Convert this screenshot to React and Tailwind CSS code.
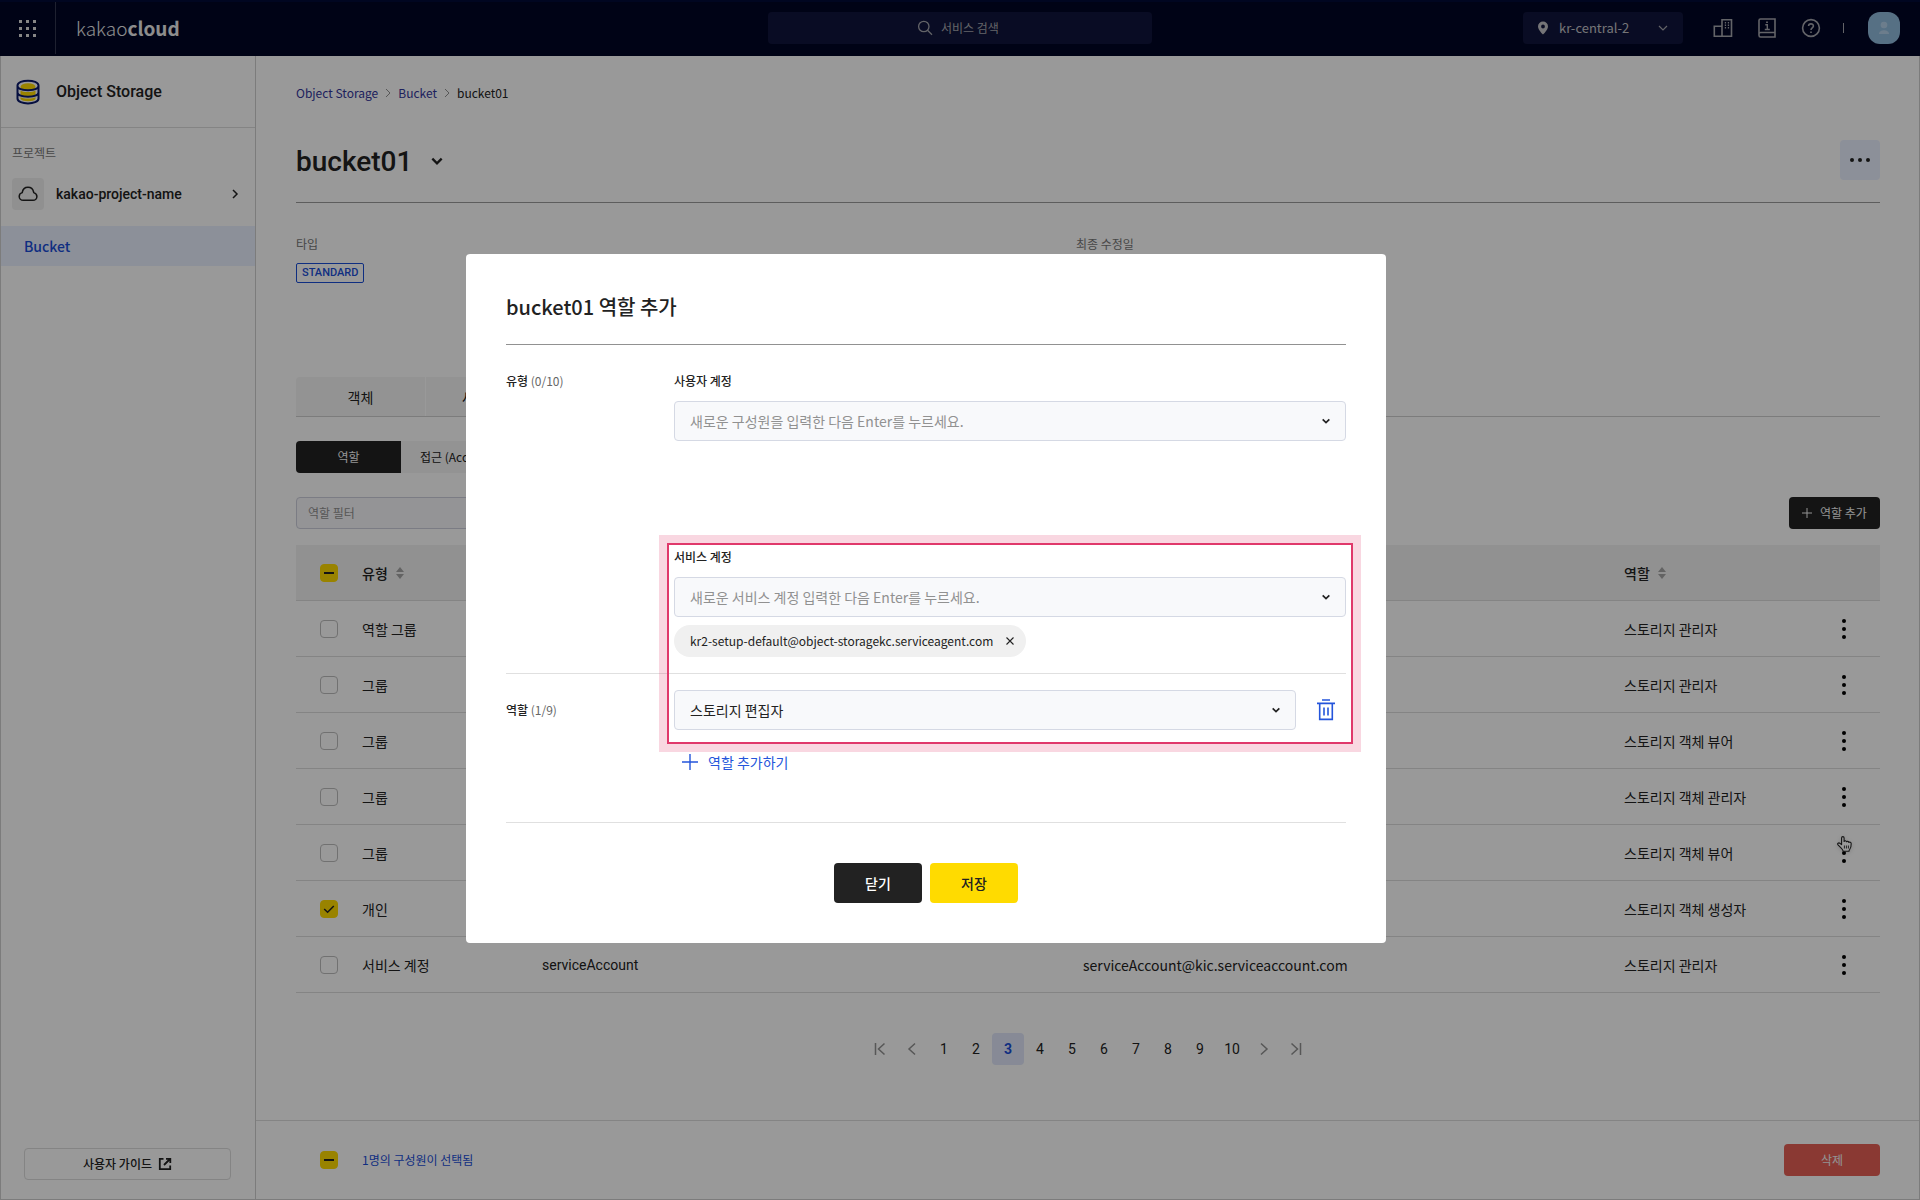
import React, { useState } from "react";

const rows = [
  { type: "역할 그룹", role: "스토리지 관리자" },
  { type: "그룹", role: "스토리지 관리자" },
  { type: "그룹", role: "스토리지 객체 뷰어" },
  { type: "그룹", role: "스토리지 객체 관리자" },
  { type: "그룹", role: "스토리지 객체 뷰어", hovered: true },
  { type: "개인", role: "스토리지 객체 생성자", checked: true },
  {
    type: "서비스 계정",
    name: "serviceAccount",
    email: "serviceAccount@kic.serviceaccount.com",
    role: "스토리지 관리자",
  },
];

const pages = [1, 2, 3, 4, 5, 6, 7, 8, 9, 10];

const Chevron = ({ className }) => (
  <svg viewBox="0 0 12 12" fill="none" stroke="currentColor" className={className}>
    <path d="M2 4l4 4 4-4" />
  </svg>
);

const SortIcon = () => (
  <svg viewBox="0 0 8 12" className="h-3 w-2 fill-[#a6a6a6]">
    <path d="M4 0l4 5H0zM4 12l4-5H0z" />
  </svg>
);

const Checkbox = ({ label, checked = false, mixed = false }) => {
  const [on, setOn] = useState(checked);
  return (
    <span className="grid h-[18px] w-[18px]">
      <input
        type="checkbox"
        aria-label={label}
        checked={on || mixed}
        onChange={() => setOn(!on)}
        className="col-start-1 row-start-1 h-[18px] w-[18px] appearance-none rounded border border-[#bdbdbd] checked:border-[#ffdb00] checked:bg-[#ffdb00]"
      />
      {(on || mixed) && (
        <svg
          viewBox="0 0 18 18"
          fill="none"
          stroke="#222"
          className="pointer-events-none col-start-1 row-start-1 h-[18px] w-[18px]"
        >
          {mixed ? (
            <path d="M4 9h10" strokeWidth="2" />
          ) : (
            <path d="M4.2 9l3.4 3.2L13.8 6" strokeWidth="1.5" />
          )}
        </svg>
      )}
    </span>
  );
};

const HandCursor = () => (
  <svg
    viewBox="0 0 18 18"
    className="pointer-events-none absolute top-2.5 left-7 h-[18px] w-[18px] drop-shadow-sm"
    fill="#fff"
    stroke="#222"
    strokeWidth="1.1"
    strokeLinejoin="round"
  >
    <path d="M5.6 9.6V3.1c0-1.9 2.5-1.9 2.5 0v3.4c.5-1 2.1-.9 2.4.3.6-.8 2-.6 2.3.6.9-.6 2.4-.2 2.4 1.3 0 2.5-.2 4.3-1.5 5.8-.5.6-.7 1.2-.7 1.7H7.2c-.3-1.5-1.6-2.7-2.7-3.8L2 9.9c-1-1.2.6-2.6 1.8-1.7z" />
    <path d="M8.4 10.5v3M10.4 10.5v3M12.4 10.5v3" strokeWidth="0.9" />
  </svg>
);

const Header = () => (
  <header className="flex h-14 items-center border-t-2 border-[#000a38] bg-[#000626] pr-5 pb-0.5 text-[#a6a7ae]">
    <button
      aria-label="메뉴"
      className="flex h-full w-14 items-center justify-center border-r border-[#333850]"
    >
      <svg viewBox="0 0 20 20" className="h-5 w-5 fill-[#e0e0e0]">
        {[2, 9, 16].map((y) =>
          [1, 8, 15].map((x) => (
            <rect key={`${x}-${y}`} x={x} y={y} width="3" height="3" />
          ))
        )}
      </svg>
    </button>
    <a href="#" className="w-[712px] shrink pl-5 text-[19px] leading-8 font-light text-[#ececec]">
      kakao<b className="font-bold">cloud</b>
    </a>
    <label className="flex h-8 w-96 items-center justify-center gap-2 rounded bg-[#10153c]">
      <svg viewBox="0 0 16 16" fill="none" stroke="currentColor" strokeWidth="1.3" className="h-4 w-4">
        <circle cx="6.8" cy="6.5" r="5.2" />
        <path d="M10.5 10.3l4.5 4.4" />
      </svg>
      <input
        type="text"
        placeholder="서비스 검색"
        className="w-[62px] text-xs outline-none placeholder:text-[#a6a7ae]"
      />
    </label>
    <div className="ml-auto flex items-center">
      <button className="flex h-8 w-40 items-center rounded bg-[#10153c] px-3.5 text-[13px]">
        <svg viewBox="0 0 12 14" className="h-3.5 w-3 fill-[#c4c4c8]">
          <path
            fillRule="evenodd"
            d="M6 .5a5 5 0 00-5 5C1 9 6 13.5 6 13.5S11 9 11 5.5a5 5 0 00-5-5zM6 3.6a1.9 1.9 0 110 3.8 1.9 1.9 0 010-3.8z"
          />
        </svg>
        <span className="ml-2.5 text-[#c4c4c8]">kr-central-2</span>
        <Chevron className="ml-auto h-3 w-3 stroke-[1.2]" />
      </button>
      <button aria-label="조직" className="ml-[30px]">
        <svg viewBox="0 0 20 20" fill="none" stroke="currentColor" strokeWidth="1.6" className="h-5 w-5">
          <path d="M9 18.2V1.8h9.5v16.4H1.3V8.2H9M9 18.2V8" />
          <path d="M11.8 4.8h4.4M11.8 7.3h4.4M11.8 9.8h4.4" strokeDasharray="1.3 1.7" />
        </svg>
      </button>
      <button aria-label="문서" className="ml-6">
        <svg viewBox="0 0 20 20" fill="none" stroke="currentColor" strokeWidth="1.6" className="h-5 w-5">
          <path d="M18 14.5V1H3.5C2.5 1 2 1.6 2 2.5v14.8c0 1.1.6 1.7 1.6 1.7H18v-4.5H3.6c-1 0-1.6.6-1.6 1.5" />
          <path d="M8.3 6.8h2v4.7M7.8 11.5h5" strokeWidth="1.4" />
          <path d="M10 3.4v1.7" strokeWidth="1.8" />
        </svg>
      </button>
      <button aria-label="도움말" className="ml-6">
        <svg viewBox="0 0 20 20" fill="none" stroke="currentColor" strokeWidth="1.6" className="h-5 w-5">
          <circle cx="10" cy="10" r="8.4" />
          <path d="M7.6 8.1c0-3 4.8-3 4.8-.1 0 1.8-2.4 1.9-2.4 3.9" />
          <path d="M10 13.4v1.7" />
        </svg>
      </button>
      <span className="ml-[22px] h-2.5 w-px bg-[#a6a7ae]" />
      <button aria-label="내 계정" className="ml-6 flex h-8 w-8 items-center justify-center rounded-xl bg-[#90bbdc]">
        <svg viewBox="0 0 12 14" className="h-3.5 w-3 fill-[#b4d1ea]">
          <circle cx="6" cy="4" r="3.3" />
          <path d="M1 13c0-5 10-5 10 0z" />
        </svg>
      </button>
    </div>
  </header>
);

const Sidebar = () => (
  <aside className="flex w-[255px] shrink-0 flex-col border-r border-[#cfcfcf]">
    <div className="flex h-[72px] items-center gap-4 border-b border-[#dcdcdc] pl-[15px]">
      <svg viewBox="0 0 24 26" className="h-[26px] w-6" fill="none" stroke="#0a1a6b" strokeWidth="2">
        <g fill="#ffdb00" stroke="none">
          <ellipse cx="12" cy="8" rx="7.5" ry="3.8" />
          <path d="M4.5 11.5c3 2 12 2 15 0v4c-2 2.5-13 2.5-15 0zM4.5 18c3 2 12 2 15 0v2c-2 3-13 3-15 0z" />
        </g>
        <path d="M1.5 6.5c0-6.5 21-6.5 21 0v13c0 6.5-21 6.5-21 0zM1.5 7c0 5.5 21 5.5 21 0M1.5 13.5c0 5.5 21 5.5 21 0" />
      </svg>
      <h2 className="font-[Roboto] text-base font-medium">Object Storage</h2>
    </div>
    <p className="mt-4 pl-[11px] text-xs leading-[18px] text-[#777]">프로젝트</p>
    <button className="mt-4 flex h-8 items-center pr-3.5 pl-[11px]">
      <span className="flex h-8 w-8 items-center justify-center rounded bg-[#f0f0f0]">
        <svg viewBox="0 0 20 20" fill="none" stroke="#222" strokeWidth="1.5" className="h-5 w-5" strokeLinecap="round">
          <path d="M15.7 8.6c2.5.7 3.2 2.5 3.2 3.8 0 2.2-1.7 3.9-3.9 3.9H5.2c-2.2 0-4-1.7-4-3.9 0-1.9 1.2-3.3 3-3.8C4.7 5.5 7 3.3 10 3.3c2.8 0 5 1.9 5.6 4.7" />
        </svg>
      </span>
      <span className="ml-3 font-[Roboto] text-sm font-medium">kakao-project-name</span>
      <Chevron className="ml-auto h-3 w-3 -rotate-90 stroke-[1.5]" />
    </button>
    <a href="#" className="mt-4 flex h-10 items-center bg-[#e9f0ff] pl-[23px] text-sm font-medium text-[#1a4ed8]">
      Bucket
    </a>
    <div className="mt-auto mb-[19px] pr-6 pl-[23px]">
      <button className="flex h-8 w-full items-center justify-center gap-1.5 rounded border border-[#dcdcdc] text-xs font-medium">
        사용자 가이드
        <svg viewBox="0 0 14 14" fill="none" stroke="#222" strokeWidth="1.8" className="h-3.5 w-3.5">
          <path d="M5.5 1.8H1.8v10.4h10.4V8.5M8 1.8h4.3V6M12 2L6 8" />
        </svg>
      </button>
    </div>
  </aside>
);

const PageArrow = ({ label, d }) => (
  <button aria-label={label} className="flex h-8 w-8 items-center justify-center">
    <svg viewBox="0 0 16 16" fill="none" stroke="#919191" strokeWidth="1.5" className="h-4 w-4">
      <path d={d} />
    </svg>
  </button>
);

const RoleTable = () => (
  <table className="mt-4 w-full table-fixed border-collapse text-left text-sm">
    <colgroup>
      <col className="w-[66px]" />
      <col className="w-[180px]" />
      <col />
      <col />
      <col className="w-[184px]" />
      <col className="w-[72px]" />
    </colgroup>
    <thead>
      <tr className="h-[55px] border-b border-[#dcdcdc] bg-[#f2f2f2] *:pt-0.5">
        <th className="pl-6">
          <Checkbox label="전체 선택" mixed />
        </th>
        <th className="font-medium">
          <span className="flex items-center gap-2">
            유형 <SortIcon />
          </span>
        </th>
        <th />
        <th />
        <th className="font-medium">
          <span className="flex items-center gap-2">
            역할 <SortIcon />
          </span>
        </th>
        <th />
      </tr>
    </thead>
    <tbody>
      {rows.map((row, i) => (
        <tr key={i} className="h-14 border-b border-[#dcdcdc] *:pt-0.5">
          <td className="pl-6">
            <Checkbox label={`${row.type} 선택`} checked={row.checked} />
          </td>
          <td>{row.type}</td>
          <td className="font-[Roboto]">{row.name}</td>
          <td>{row.email}</td>
          <td>{row.role}</td>
          <td className="relative">
            <button aria-label="더보기" className="flex w-full justify-center">
              <svg viewBox="0 0 4 20" className="h-5 w-1 fill-black">
                <circle cx="2" cy="2" r="2" />
                <circle cx="2" cy="10" r="2" />
                <circle cx="2" cy="18" r="2" />
              </svg>
            </button>
            {row.hovered && <HandCursor />}
          </td>
        </tr>
      ))}
    </tbody>
  </table>
);

const BucketPage = () => (
  <main className="flex min-w-0 flex-1 flex-col">
    <div className="pr-[39px] pl-10">
      <nav className="flex h-[74px] items-center gap-1 text-xs text-[#33369c]">
        <a href="#">Object Storage</a>
        <Chevron className="h-3 w-3 -rotate-90 text-[#919191]" />
        <a href="#">Bucket</a>
        <Chevron className="h-3 w-3 -rotate-90 text-[#919191]" />
        <span className="text-[#222]">bucket01</span>
      </nav>
      <div className="mt-2.5 flex h-[63px] items-start border-b border-[#9c9c9c]">
        <h1 className="font-[Roboto] text-[28px] leading-[44px] font-medium">bucket01</h1>
        <button aria-label="버킷 선택" className="ml-[18px] flex h-[42px] items-center">
          <Chevron className="h-3.5 w-3.5 stroke-2" />
        </button>
        <button aria-label="더보기" className="ml-auto flex h-10 w-10 items-center justify-center rounded bg-[#e9f0ff]">
          <svg viewBox="0 0 20 4" className="h-1 w-5 fill-[#222]">
            <circle cx="2" cy="2" r="2" />
            <circle cx="10" cy="2" r="2" />
            <circle cx="18" cy="2" r="2" />
          </svg>
        </button>
      </div>

      <dl className="mt-8 grid grid-cols-[780fr_804fr] text-xs leading-[18px]">
        <div>
          <dt className="text-[#777]">타입</dt>
          <dd className="mt-2.5 flex h-5">
            <span className="flex items-center rounded-xs border border-[#1a4ed8] px-[5px] font-[Roboto] text-[11px] font-medium text-[#1a4ed8]">
              STANDARD
            </span>
          </dd>
        </div>
        <div>
          <dt className="text-[#777]">최종 수정일</dt>
        </div>
      </dl>

      <div className="mt-[94px] flex h-10 border-b border-[#cfcfcf] text-sm">
        <button className="w-[130px] rounded-tl border-r border-white bg-[#f5f5f5]">객체</button>
        <button className="bg-[#f5f5f5] px-9">세부 정보</button>
      </div>
      <div className="mt-6 flex h-8 text-xs">
        <button className="w-[105px] rounded-l bg-[#222] text-[#f5f5f5]">역할</button>
        <button className="rounded-r bg-[#f5f5f5] px-[19px]">접근 (Access)</button>
      </div>
      <div className="mt-6 flex h-8 justify-between text-xs">
        <input
          type="text"
          aria-label="역할 필터"
          placeholder="역할 필터"
          className="w-[360px] rounded border border-[#cdcfdc] bg-[#f7f7fb] px-[11px] placeholder:text-[#919191]"
        />
        <button className="flex w-[91px] items-center justify-center gap-2 rounded bg-[#222] text-[#f5f5f5]">
          <svg viewBox="0 0 10 10" stroke="currentColor" className="h-2.5 w-2.5">
            <path d="M5 0v10M0 5h10" />
          </svg>
          역할 추가
        </button>
      </div>

      <RoleTable />

      <nav aria-label="페이지" className="mt-10 flex justify-center font-[Roboto] text-sm">
        <PageArrow label="처음" d="M3.5 2v12M12.5 2.5L6.5 8l6 5.5" />
        <PageArrow label="이전" d="M11 2.5L5 8l6 5.5" />
        {pages.map((page) => (
          <button
            key={page}
            className={
              page === 3
                ? "h-8 w-8 rounded bg-[#e1e7fa] font-bold text-[#1a4ed8]"
                : "h-8 w-8"
            }
          >
            {page}
          </button>
        ))}
        <PageArrow label="다음" d="M5 2.5L11 8l-6 5.5" />
        <PageArrow label="마지막" d="M12.5 2v12M3.5 2.5L9.5 8l-6 5.5" />
      </nav>
    </div>

    <footer className="mt-auto flex h-[79px] items-center border-t border-[#dcdcdc] pr-[39px] pl-16 text-xs">
      <Checkbox label="선택 해제" mixed />
      <span className="ml-6 text-[#1a4ed8]">1명의 구성원이 선택됨</span>
      <button className="ml-auto h-8 w-24 rounded bg-[#e66055] text-[#f5f5f5]">삭제</button>
    </footer>
  </main>
);

const AccountField = ({ id, label, placeholder }) => (
  <div>
    <label htmlFor={id} className="block text-xs leading-6 font-medium">
      {label}
    </label>
    <div className="mt-2 flex h-10 items-center rounded border border-[#d5d9e4] bg-[#f8f9fb] pr-3.5 pl-[15px]">
      <input
        id={id}
        type="text"
        placeholder={placeholder}
        className="min-w-0 flex-1 text-sm outline-none placeholder:text-[#919191]"
      />
      <Chevron className="h-2.5 w-2.5 stroke-2" />
    </div>
  </div>
);

const AddRoleDialog = () => (
  <div
    role="dialog"
    aria-labelledby="dialog-title"
    className="w-[920px] rounded bg-white p-10 text-[#222]"
  >
    <h2 id="dialog-title" className="border-b border-[#919191] pb-6 text-xl leading-[26px] font-medium">
      bucket01 역할 추가
    </h2>

    <div className="mt-6 mb-[104px] grid grid-cols-[168px_1fr]">
      <p className="text-xs leading-6 font-medium">
        유형 <span className="font-normal text-[#666]">(0/10)</span>
      </p>
      <AccountField
        id="user"
        label="사용자 계정"
        placeholder="새로운 구성원을 입력한 다음 Enter를 누르세요."
      />
    </div>

    <div className="relative">
      <div className="border-b border-[#e0e0e0] pb-4 pl-[168px]">
        <AccountField
          id="service"
          label="서비스 계정"
          placeholder="새로운 서비스 계정 입력한 다음 Enter를 누르세요."
        />
        <div className="mt-2 flex">
          <span className="flex h-8 items-center gap-[13px] rounded-full bg-[#f0f0f0] pr-3 pl-4 text-xs">
            kr2-setup-default@object-storagekc.serviceagent.com
            <button aria-label="제거">
              <svg viewBox="0 0 8 8" stroke="#222" strokeWidth="1.1" className="h-2 w-2">
                <path d="M.5.5l7 7M7.5.5l-7 7" />
              </svg>
            </button>
          </span>
        </div>
      </div>

      <div className="mt-4 grid grid-cols-[168px_1fr_50px] items-center">
        <label htmlFor="role" className="text-xs leading-6 font-medium">
          역할 <span className="font-normal text-[#666]">(1/9)</span>
        </label>
        <div className="grid h-10 items-center">
          <select
            id="role"
            className="col-start-1 row-start-1 h-10 w-full appearance-none rounded border border-[#d5d9e4] bg-[#f8f9fb] px-[15px] text-sm"
          >
            <option>스토리지 편집자</option>
          </select>
          <Chevron className="pointer-events-none col-start-1 row-start-1 mr-[15px] h-2.5 w-2.5 justify-self-end stroke-2" />
        </div>
        <button aria-label="삭제" className="flex justify-end pr-[11px]">
          <svg viewBox="0 0 18 22" fill="none" stroke="#2455db" strokeWidth="1.6" className="h-[22px] w-[18px]">
            <path d="M5 1h8M0 4.4h18M2.7 4.4v16h12.6v-16M7 8.5v8M11 8.5v8" />
          </svg>
        </button>
      </div>

      {/* emphasised area around the service account and its role */}
      <div className="pointer-events-none absolute -top-0.5 -right-[7px] -bottom-3.5 left-[161px] border-2 border-[#e0386b] shadow-[0_0_0_8px_rgba(224,56,107,0.2)]" />
    </div>

    <div className="mt-5 border-b border-[#e0e0e0] pb-12 pl-44">
      <button className="flex h-6 items-center gap-2.5 text-sm text-[#2455db]">
        <svg viewBox="0 0 16 16" stroke="currentColor" strokeWidth="1.4" className="h-4 w-4">
          <path d="M8 0v16M0 8h16" />
        </svg>
        역할 추가하기
      </button>
    </div>

    <div className="mt-10 flex justify-center gap-2 text-sm font-medium">
      <button className="h-10 w-[88px] rounded bg-[#222] text-white">닫기</button>
      <button className="h-10 w-[88px] rounded bg-[#ffdb00]">저장</button>
    </div>
  </div>
);

export default function App() {
  return (
    <div className="flex min-h-screen flex-col bg-white font-['Noto_Sans_CJK_KR',sans-serif] text-[#222]">
      <Header />
      <div className="flex flex-1 border-x border-b border-[#cfcfcf]">
        <Sidebar />
        <BucketPage />
      </div>
      <div className="fixed inset-0 flex items-start justify-center bg-black/40 pt-[254px] pr-[68px]">
        <AddRoleDialog />
      </div>
    </div>
  );
}
